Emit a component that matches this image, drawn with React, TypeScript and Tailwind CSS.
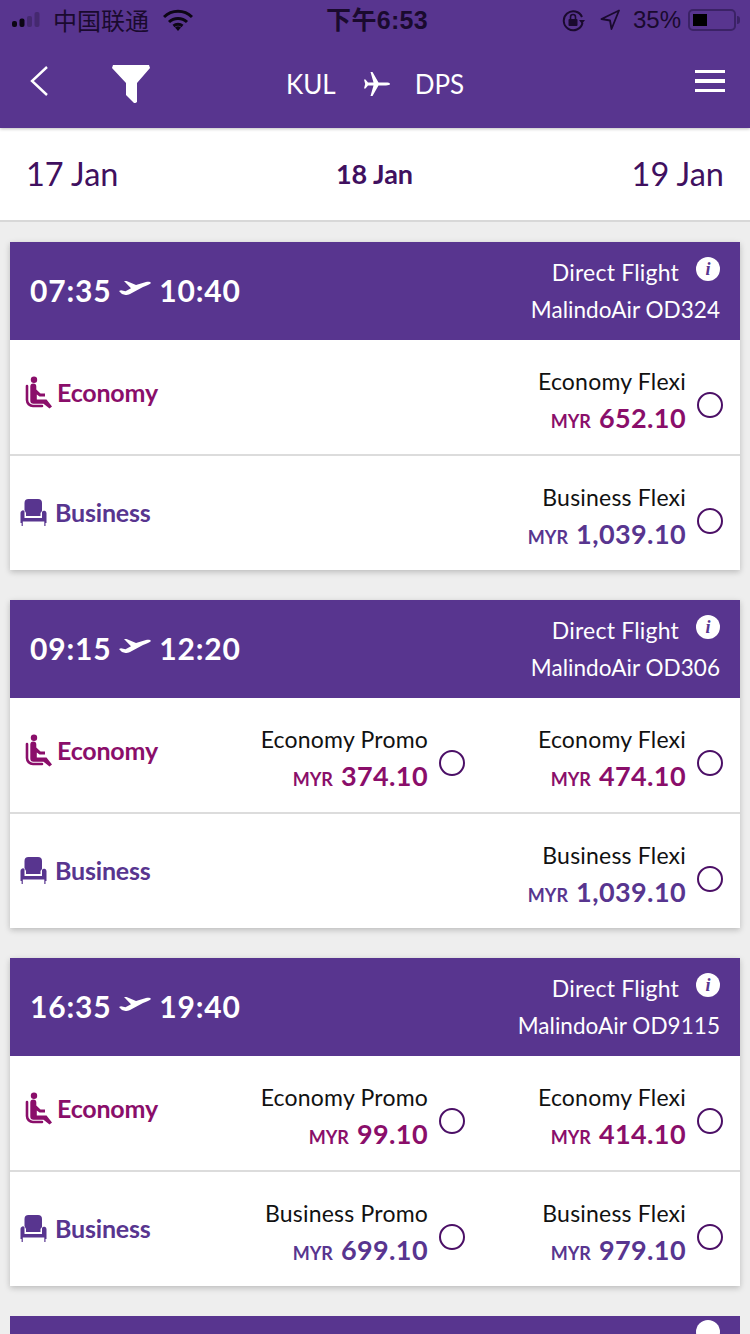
import React from "react";

const font = { fontFamily: 'Lato,"Noto Sans CJK SC",sans-serif' };

function Seat() {
  return (
    <svg width="28" height="33" viewBox="0 0 28 33" className="shrink-0">
      <circle cx="9" cy="3.7" r="3.2" fill="#8a0e6a" />
      <path d="M2 10 V24 a6 6 0 0 0 6 6 H17" fill="none" stroke="#8a0e6a" strokeWidth="2.6" strokeLinecap="round" />
      <path d="M5.3 10.5 a3 3 0 0 1 6 0 V13.5 L15.5 17.5 H20 V20.5 H14.5 L11.8 18.5 V23.5 H21.5 L27 30.5 L24.5 32.5 L18.5 27.7 H8.5 a3.2 3.2 0 0 1 -3.2 -3.2 Z" fill="#8a0e6a" />
    </svg>
  );
}

function Sofa() {
  return (
    <svg width="27" height="27" viewBox="0 0 27 27" className="shrink-0">
      <path d="M4.5 11 V4 a4 4 0 0 1 4 -4 H18 a4 4 0 0 1 4 4 V12 L20.5 14 V17 H6 V14 Z" fill="#58358f" />
      <path d="M0.5 14 a2.4 2.4 0 0 1 4 -2 V19 H22 V13 a2.4 2.4 0 0 1 4.5 1 V24 H25.5 V27 H24.3 V22.5 H2.8 V27 H1.6 V24 H0.5 Z" fill="#58358f" />
    </svg>
  );
}

function TopPlane() {
  return (
    <svg width="32" height="14" viewBox="0 0 32 14" className="block">
      <path d="M5 0 L7.5 0 L17 4 L27 1 C29.5 .4 31.6 .9 32 2 C31 3.4 27.5 4.6 24 6 L11 13 C9.5 13.8 7.8 14 6.5 14 L3 13 L0 10 L2 9.2 L6.5 10.2 L12 7.2 Z" fill="#fff" />
    </svg>
  );
}

function Option({ name, price, color }: { name: string; price: string; color: string }) {
  return (
    <div className="w-[258px] flex items-center justify-end">
      <div className="flex flex-col items-end mt-[8px]">
        <div className="text-[23px] leading-[30px] text-[#111] tracking-[0.2px]">{name}</div>
        <div className={`flex items-baseline gap-[8px] mt-[6px] font-bold leading-[32px] ${color}`}>
          <span className="text-[18px]">MYR</span>
          <span className="text-[27px] tracking-[0.4px]">{price}</span>
        </div>
      </div>
      <div className="ml-[11px] mt-[16px] w-[26px] h-[26px] rounded-full border-[2.5px] border-[#4b0f66]" />
    </div>
  );
}

type Opt = { name: string; price: string };

function Row({ kind, opts }: { kind: "Economy" | "Business"; opts: Opt[] }) {
  const eco = kind === "Economy";
  const color = eco ? "text-[#8a0e6a]" : "text-[#58358f]";
  return (
    <div className={`flex items-center justify-between pr-[17px] ${eco ? "h-[116px] pl-[15px] border-b-2 border-[#dcdcdc]" : "h-[114px] pl-[10px]"}`}>
      <div className={`flex items-center font-bold ${color} ${eco ? "gap-[4px] -mt-[10px]" : "gap-[8px] -mt-[2px]"}`}>
        {eco ? <Seat /> : <Sofa />}
        <span className="text-[25px] leading-[32px] tracking-[-0.2px]">{kind}</span>
      </div>
      <div className="flex items-center">
        {opts.map((o) => (
          <Option key={o.name} name={o.name} price={o.price} color={color} />
        ))}
      </div>
    </div>
  );
}

function Card({ dep, arr, flight, eco, bus }: { dep: string; arr: string; flight: string; eco: Opt[]; bus: Opt[] }) {
  return (
    <div className="mx-[10px] mb-[30px] bg-white shadow-[0_2px_6px_rgba(0,0,0,0.22)]">
      <div className="h-[98px] bg-[#58358f] flex items-center justify-between pl-[20px] pr-[20px] text-white">
        <div className="flex items-center gap-[8px] text-[30px] font-bold tracking-[0.8px] -mt-[2px]">
          <span>{dep}</span>
          <span className="-mt-[4px]"><TopPlane /></span>
          <span>{arr}</span>
        </div>
        <div className="flex flex-col items-end leading-[38px] -mt-[1px]">
          <div className="flex items-center gap-[17px] text-[23px] tracking-[0.2px]">
            <span>Direct Flight</span>
            <span className="-mt-[5px] w-[24px] h-[24px] rounded-full bg-white text-[#58358f] flex items-center justify-center text-[18px] font-bold italic leading-none" style={{ fontFamily: '"Liberation Serif",serif' }}>i</span>
          </div>
          <div className="text-[22.5px] tracking-[0.05px]">{flight}</div>
        </div>
      </div>
      <Row kind="Economy" opts={eco} />
      <Row kind="Business" opts={bus} />
    </div>
  );
}

export default function App() {
  return (
    <div className="w-[750px] h-[1334px] overflow-hidden bg-[#eeeeee]" style={font}>
      <div className="h-[128px] bg-[#58358f] shadow-[0_1px_3px_rgba(0,0,0,0.25)] relative">
        <div className="h-[40px] flex items-center justify-between pl-[12px] pr-[10px] text-[#1a0a2e]">
          <div className="w-[300px] flex items-center">
            <svg width="33" height="16" viewBox="0 0 33 16" className="shrink-0">
              <rect x="0" y="9" width="5" height="6" rx="2" fill="#0c0614" />
              <rect x="7.5" y="6.5" width="5" height="8.5" rx="2" fill="#0c0614" />
              <rect x="15" y="4" width="5" height="11" rx="2" fill="#0c0614" fillOpacity="0.25" />
              <rect x="22.5" y="0" width="5" height="15" rx="2" fill="#0c0614" fillOpacity="0.25" />
            </svg>
            <span className="text-[24px] ml-[8px] leading-none" style={{ fontFamily: '"Noto Sans CJK SC",sans-serif' }}>中国联通</span>
            <svg width="30" height="22" viewBox="0 0 30 22" className="ml-[14px]">
              <path d="M1 8 a20 20 0 0 1 28 0 M6 13 a13 13 0 0 1 18 0 M10.5 17 a7 7 0 0 1 9 0" fill="none" stroke="#0c0614" strokeWidth="3" />
              <path d="M12 18.5 a4.5 4.5 0 0 1 6 0 L15 22 Z" fill="#0c0614" />
            </svg>
          </div>
          <div className="text-[25px] leading-none font-bold tracking-[0.3px] ml-[2px]" style={{ fontFamily: '"Liberation Sans","Noto Sans CJK SC",sans-serif' }}>下午6:53</div>
          <div className="w-[300px] flex items-center justify-end gap-[9px]">
            <svg width="23" height="23" viewBox="0 0 23 23" fill="none">
              <path d="M20 8 a9.5 9.5 0 1 0 .5 6" stroke="#1a0a2e" strokeWidth="2" />
              <path d="M17 9 h6 l-3 4 Z" fill="#1a0a2e" transform="translate(0 2)" />
              <rect x="6.5" y="10" width="9" height="7" rx="1" fill="#1a0a2e" />
              <path d="M8.5 10 V8 a2.5 2.5 0 0 1 5 0 V10" stroke="#1a0a2e" strokeWidth="1.6" />
            </svg>
            <svg width="20" height="22" viewBox="0 0 20 22" fill="none" className="ml-[6px]">
              <path d="M19 1.5 L1.5 10 L10 11.5 L11.5 20 Z" stroke="#1a0a2e" strokeWidth="1.8" strokeLinejoin="round" />
            </svg>
            <span className="ml-[4px] text-[24px] leading-none" style={{ fontFamily: '"Liberation Sans",sans-serif' }}>35%</span>
            <div className="-ml-[2px] flex items-center">
              <div className="w-[48px] h-[22px] rounded-[5px] border-2 border-[#3b2266] p-[3px]">
                <div className="w-[14px] h-full bg-black" />
              </div>
              <div className="w-[3px] h-[8px] bg-[#3b2266] rounded-r-sm ml-[1px]" />
            </div>
          </div>
        </div>
        <div className="h-[88px] flex items-center justify-between pl-[30px] pr-[25px] relative">
          <div className="flex items-center -mt-[6px]">
            <svg width="20" height="32" viewBox="0 0 20 32" fill="none">
              <path d="M17 2 L2 16 L17 30" stroke="#fff" strokeWidth="2.4" />
            </svg>
            <svg width="40" height="40" viewBox="0 0 40 40" className="ml-[61px] mt-[5px]">
              <path d="M2 1 H38 L39 4 L26 19 V38 L24.5 39 H23 L15 31 V19 L1 4 Z" fill="#fff" />
            </svg>
          </div>
          <div className="flex items-center text-white text-[26px] absolute left-[286px] top-0 h-[88px]">
            <span>KUL</span>
            <svg width="28" height="26" viewBox="0 0 28 26" className="ml-[27px]">
              <path d="M27 13 C27 12 25 11.6 23 11.6 H15.5 L9.5 1 H7.5 L10.5 11.6 H5 L2.5 8.5 H1 L2.2 13 L1 17.5 H2.5 L5 14.4 H10.5 L7.5 25 H9.5 L15.5 14.4 H23 C25 14.4 27 14 27 13 Z" fill="#fff" />
            </svg>
            <span className="ml-[24px]">DPS</span>
          </div>
          <div className="flex flex-col gap-[6px] -mt-[6px]">
            <div className="w-[30px] h-[3.5px] bg-white" />
            <div className="w-[30px] h-[3.5px] bg-white" />
            <div className="w-[30px] h-[3.5px] bg-white" />
          </div>
        </div>
      </div>
      <div className="h-[94px] bg-white border-b-2 border-[#d8d8d8] flex items-center justify-between px-[26px] text-[#40105f] mb-[20px]">
        <span className="text-[32.5px]">17 Jan</span>
        <span className="text-[27px] font-bold -ml-[1px]">18 Jan</span>
        <span className="text-[32.5px]">19 Jan</span>
      </div>
      <Card dep="07:35" arr="10:40" flight="MalindoAir OD324"
        eco={[{ name: "Economy Flexi", price: "652.10" }]}
        bus={[{ name: "Business Flexi", price: "1,039.10" }]} />
      <Card dep="09:15" arr="12:20" flight="MalindoAir OD306"
        eco={[{ name: "Economy Promo", price: "374.10" }, { name: "Economy Flexi", price: "474.10" }]}
        bus={[{ name: "Business Flexi", price: "1,039.10" }]} />
      <Card dep="16:35" arr="19:40" flight="MalindoAir OD9115"
        eco={[{ name: "Economy Promo", price: "99.10" }, { name: "Economy Flexi", price: "414.10" }]}
        bus={[{ name: "Business Promo", price: "699.10" }, { name: "Business Flexi", price: "979.10" }]} />
      <div className="mx-[10px] h-[98px] bg-[#58358f] flex justify-end pr-[20px] pt-[4px]">
        <span className="w-[24px] h-[24px] rounded-full bg-white" />
      </div>
    </div>
  );
}
